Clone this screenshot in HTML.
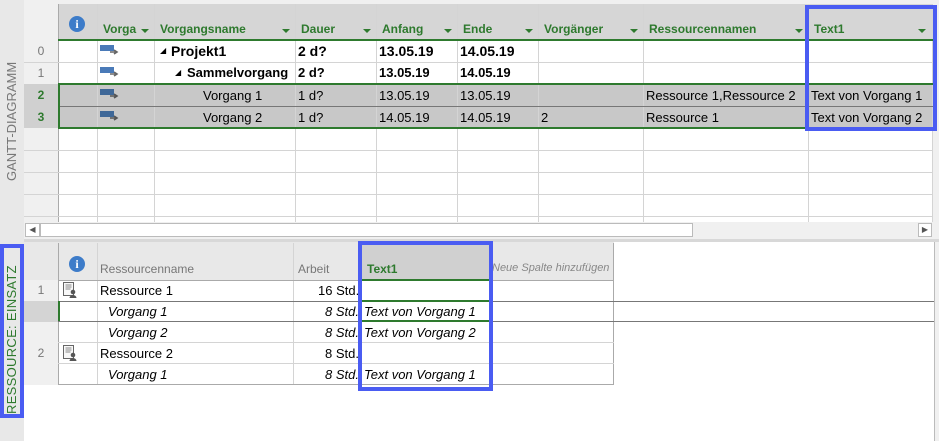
<!DOCTYPE html>
<html><head><meta charset="utf-8"><style>
*{margin:0;padding:0;box-sizing:border-box}
body{width:939px;height:441px;overflow:hidden;background:#fff;font-family:"Liberation Sans",sans-serif;position:relative}
.a{position:absolute}
.t{position:absolute;font-size:13px;white-space:nowrap;color:#000}
.h{position:absolute;font-size:12px;font-weight:bold;color:#2e7a2e;white-space:nowrap}
.dd{position:absolute;width:0;height:0;border-left:4px solid transparent;border-right:4px solid transparent;border-top:4px solid #2e7a2e}
.vl{position:absolute;width:1px;background:#d4d4d4}
.hl{position:absolute;height:1px;background:#d4d4d4}
.n{position:absolute;font-size:12px;color:#777;width:34px;text-align:center}
.ic{position:absolute}
</style></head><body>
<div class="a" style="left:0;top:0;width:939px;height:4px;background:#f0f0f0"></div>
<div class="a" style="left:0;top:0;width:24px;height:441px;background:#e8e8e8"></div>
<div class="a" style="left:24px;top:4px;width:34px;height:218px;background:#f0f0f0"></div>
<div class="a" style="left:58px;top:4px;width:875px;height:36px;background:#d6d6d6"></div>
<div class="a" style="left:933px;top:4px;width:6px;height:236px;background:#f0f0f0"></div>
<div class="a" style="left:24px;top:84px;width:34px;height:44px;background:#d0d0d0"></div>
<div class="a" style="left:58px;top:84px;width:875px;height:44px;background:#c8c8c8"></div>
<div class="vl" style="left:58px;top:4px;height:218px;background:#aaa"></div>
<div class="vl" style="left:97px;top:4px;height:218px"></div>
<div class="vl" style="left:154px;top:4px;height:218px"></div>
<div class="vl" style="left:295px;top:4px;height:218px"></div>
<div class="vl" style="left:376px;top:4px;height:218px"></div>
<div class="vl" style="left:457px;top:4px;height:218px"></div>
<div class="vl" style="left:538px;top:4px;height:218px"></div>
<div class="vl" style="left:643px;top:4px;height:218px"></div>
<div class="vl" style="left:808px;top:4px;height:218px"></div>
<div class="vl" style="left:932px;top:4px;height:218px"></div>
<div class="hl" style="left:24px;top:62px;width:909px"></div>
<div class="hl" style="left:24px;top:150px;width:909px"></div>
<div class="hl" style="left:24px;top:172px;width:909px"></div>
<div class="hl" style="left:24px;top:194px;width:909px"></div>
<div class="hl" style="left:24px;top:216px;width:909px"></div>
<div class="hl" style="left:58px;top:106px;width:875px;background:#777"></div>
<div class="a" style="left:58px;top:39px;width:875px;height:2px;background:#2e7a2e"></div>
<div class="a" style="left:58px;top:83px;width:875px;height:2px;background:#2e7a2e"></div>
<div class="a" style="left:58px;top:127px;width:875px;height:2px;background:#2e7a2e"></div>
<div class="a" style="left:58px;top:84px;width:2px;height:44px;background:#2e7a2e"></div>
<div class="a" style="left:69px;top:16px;width:16px;height:16px;border-radius:50%;background:#3d7cc9;color:#fff;font:bold 12px 'Liberation Serif',serif;text-align:center;line-height:16px">i</div>
<div class="h" style="left:103px;top:22px">Vorga</div><div class="dd" style="left:141px;top:29px"></div>
<div class="h" style="left:160px;top:22px">Vorgangsname</div><div class="dd" style="left:282px;top:29px"></div>
<div class="h" style="left:301px;top:22px">Dauer</div><div class="dd" style="left:363px;top:29px"></div>
<div class="h" style="left:382px;top:22px">Anfang</div><div class="dd" style="left:444px;top:29px"></div>
<div class="h" style="left:463px;top:22px">Ende</div><div class="dd" style="left:525px;top:29px"></div>
<div class="h" style="left:544px;top:22px">Vorgänger</div><div class="dd" style="left:630px;top:29px"></div>
<div class="h" style="left:649px;top:22px">Ressourcennamen</div><div class="dd" style="left:795px;top:29px"></div>
<div class="h" style="left:814px;top:22px">Text1</div><div class="dd" style="left:918px;top:29px"></div>
<div class="n" style="left:24px;top:44px">0</div>
<div class="n" style="left:24px;top:66px">1</div>
<div class="n" style="left:24px;top:88px;color:#2e7a2e;font-weight:bold">2</div>
<div class="n" style="left:24px;top:110px;color:#2e7a2e;font-weight:bold">3</div>
<svg class="ic" style="left:100px;top:44px" width="20" height="12"><rect x="0" y="1" width="14" height="6" fill="#4a7ab8"/><path d="M10 8h6M14 6l3 2-3 2" stroke="#666" stroke-width="1.6" fill="none"/></svg>
<svg class="ic" style="left:100px;top:66px" width="20" height="12"><rect x="0" y="1" width="14" height="6" fill="#4a7ab8"/><path d="M10 8h6M14 6l3 2-3 2" stroke="#666" stroke-width="1.6" fill="none"/></svg>
<svg class="ic" style="left:100px;top:88px" width="20" height="12"><rect x="0" y="1" width="14" height="6" fill="#3f6898"/><path d="M10 8h6M14 6l3 2-3 2" stroke="#555" stroke-width="1.6" fill="none"/></svg>
<svg class="ic" style="left:100px;top:110px" width="20" height="12"><rect x="0" y="1" width="14" height="6" fill="#3f6898"/><path d="M10 8h6M14 6l3 2-3 2" stroke="#555" stroke-width="1.6" fill="none"/></svg>
<div class="t" style="left:160px;top:46px;font-size:8px">◢</div>
<div class="t" style="left:171px;top:43px;font-weight:bold;font-size:14px">Projekt1</div>
<div class="t" style="left:298px;top:43px;font-weight:bold;font-size:14px">2 d?</div>
<div class="t" style="left:379px;top:43px;font-weight:bold;font-size:14px">13.05.19</div>
<div class="t" style="left:460px;top:43px;font-weight:bold;font-size:14px">14.05.19</div>
<div class="t" style="left:175px;top:68px;font-size:8px">◢</div>
<div class="t" style="left:187px;top:65px;font-weight:bold">Sammelvorgang</div>
<div class="t" style="left:298px;top:65px;font-weight:bold">2 d?</div>
<div class="t" style="left:379px;top:65px;font-weight:bold">13.05.19</div>
<div class="t" style="left:460px;top:65px;font-weight:bold">14.05.19</div>
<div class="t" style="left:203px;top:88px">Vorgang 1</div>
<div class="t" style="left:298px;top:88px">1 d?</div>
<div class="t" style="left:379px;top:88px">13.05.19</div>
<div class="t" style="left:460px;top:88px">13.05.19</div>
<div class="t" style="left:646px;top:88px">Ressource 1,Ressource 2</div>
<div class="t" style="left:811px;top:88px">Text von Vorgang 1</div>
<div class="t" style="left:203px;top:110px">Vorgang 2</div>
<div class="t" style="left:298px;top:110px">1 d?</div>
<div class="t" style="left:379px;top:110px">14.05.19</div>
<div class="t" style="left:460px;top:110px">14.05.19</div>
<div class="t" style="left:541px;top:110px">2</div>
<div class="t" style="left:646px;top:110px">Ressource 1</div>
<div class="t" style="left:811px;top:110px">Text von Vorgang 2</div>
<div class="a" style="left:805px;top:5px;width:132px;height:126px;border:4px solid #4a5cf2"></div>
<div class="t" style="left:4px;top:181px;transform:rotate(-90deg);transform-origin:0 0;font-size:13px;color:#777">GANTT-DIAGRAMM</div>
<div class="a" style="left:24px;top:222px;width:915px;height:17px;background:#f0f0f0"></div>
<div class="a" style="left:25px;top:223px;width:15px;height:14px;background:#fff;border:1px solid #bbb;font-size:8px;color:#555;text-align:center;line-height:12px">◀</div>
<div class="a" style="left:40px;top:223px;width:653px;height:14px;background:#fff;border:1px solid #bbb"></div>
<div class="a" style="left:918px;top:223px;width:14px;height:14px;background:#fff;border:1px solid #bbb;font-size:8px;color:#555;text-align:center;line-height:12px">▶</div>
<div class="a" style="left:24px;top:239px;width:915px;height:3px;background:#d8d8d8"></div>
<div class="a" style="left:24px;top:242px;width:590px;height:38px;background:#e8e8e8"></div>
<div class="a" style="left:934px;top:242px;width:5px;height:199px;background:#f0f0f0"></div>
<div class="vl" style="left:934px;top:242px;height:199px;background:#bbb"></div>
<div class="a" style="left:24px;top:280px;width:34px;height:105px;background:#f0f0f0"></div>
<div class="a" style="left:24px;top:301px;width:34px;height:21px;background:#d4d4d4"></div>
<div class="a" style="left:360px;top:245px;width:130px;height:35px;background:#d0d0d0"></div>
<div class="vl" style="left:58px;top:243px;height:142px;background:#aaa"></div>
<div class="vl" style="left:97px;top:243px;height:142px"></div>
<div class="vl" style="left:293px;top:243px;height:142px"></div>
<div class="vl" style="left:360px;top:243px;height:142px"></div>
<div class="vl" style="left:490px;top:243px;height:142px"></div>
<div class="vl" style="left:613px;top:243px;height:142px;background:#aaa"></div>
<div class="hl" style="left:58px;top:280px;width:556px;background:#aaa"></div>
<div class="hl" style="left:58px;top:301px;width:876px;background:#777"></div>
<div class="hl" style="left:58px;top:321px;width:876px;background:#777"></div>
<div class="hl" style="left:58px;top:342px;width:556px"></div>
<div class="hl" style="left:58px;top:363px;width:556px"></div>
<div class="hl" style="left:58px;top:384px;width:556px;background:#aaa"></div>
<div class="a" style="left:360px;top:279px;width:130px;height:2px;background:#2e7a2e"></div>
<div class="a" style="left:360px;top:300px;width:130px;height:2px;background:#2e7a2e"></div>
<div class="a" style="left:360px;top:320px;width:130px;height:2px;background:#2e7a2e"></div>
<div class="a" style="left:58px;top:301px;width:2px;height:20px;background:#2e7a2e"></div>
<div class="a" style="left:69px;top:256px;width:16px;height:16px;border-radius:50%;background:#3d7cc9;color:#fff;font:bold 12px 'Liberation Serif',serif;text-align:center;line-height:16px">i</div>
<div class="t" style="left:100px;top:262px;font-size:12px;color:#777">Ressourcenname</div>
<div class="t" style="left:298px;top:262px;font-size:12px;color:#777">Arbeit</div>
<div class="h" style="left:367px;top:262px">Text1</div>
<div class="t" style="left:492px;top:262px;font-size:11px;color:#888;font-style:italic">Neue Spalte hinzufügen</div>
<div class="n" style="left:24px;top:283px">1</div>
<div class="n" style="left:24px;top:346px">2</div>
<svg class="ic" style="left:62px;top:282px" width="16" height="17"><rect x="1.5" y="0.5" width="10" height="13" fill="#f8f8f8" stroke="#666"/><path d="M3.5 3h6M3.5 5h6M3.5 7h5" stroke="#888"/><circle cx="11" cy="10" r="2.3" fill="#555"/><path d="M7.5 16a3.5 3 0 0 1 7 0z" fill="#555"/></svg>
<svg class="ic" style="left:62px;top:345px" width="16" height="17"><rect x="1.5" y="0.5" width="10" height="13" fill="#f8f8f8" stroke="#666"/><path d="M3.5 3h6M3.5 5h6M3.5 7h5" stroke="#888"/><circle cx="11" cy="10" r="2.3" fill="#555"/><path d="M7.5 16a3.5 3 0 0 1 7 0z" fill="#555"/></svg>
<div class="t" style="left:100px;top:283px">Ressource 1</div>
<div class="t" style="left:318px;top:283px">16 Std.</div>
<div class="t" style="left:108px;top:304px;font-style:italic">Vorgang 1</div>
<div class="t" style="left:325px;top:304px;font-style:italic">8 Std.</div>
<div class="t" style="left:364px;top:304px;font-style:italic">Text von Vorgang 1</div>
<div class="t" style="left:108px;top:325px;font-style:italic">Vorgang 2</div>
<div class="t" style="left:325px;top:325px;font-style:italic">8 Std.</div>
<div class="t" style="left:364px;top:325px;font-style:italic">Text von Vorgang 2</div>
<div class="t" style="left:100px;top:346px">Ressource 2</div>
<div class="t" style="left:325px;top:346px">8 Std.</div>
<div class="t" style="left:108px;top:367px;font-style:italic">Vorgang 1</div>
<div class="t" style="left:325px;top:367px;font-style:italic">8 Std.</div>
<div class="t" style="left:364px;top:367px;font-style:italic">Text von Vorgang 1</div>
<div class="a" style="left:358px;top:241px;width:135px;height:150px;border:4px solid #4a5cf2"></div>
<div class="a" style="left:0;top:244px;width:24px;height:174px;border:4px solid #4a5cf2"></div>
<div class="t" style="left:4px;top:414px;transform:rotate(-90deg);transform-origin:0 0;font-size:13px;color:#2e7a2e;letter-spacing:0.3px">RESSOURCE: EINSATZ</div>
</body></html>
